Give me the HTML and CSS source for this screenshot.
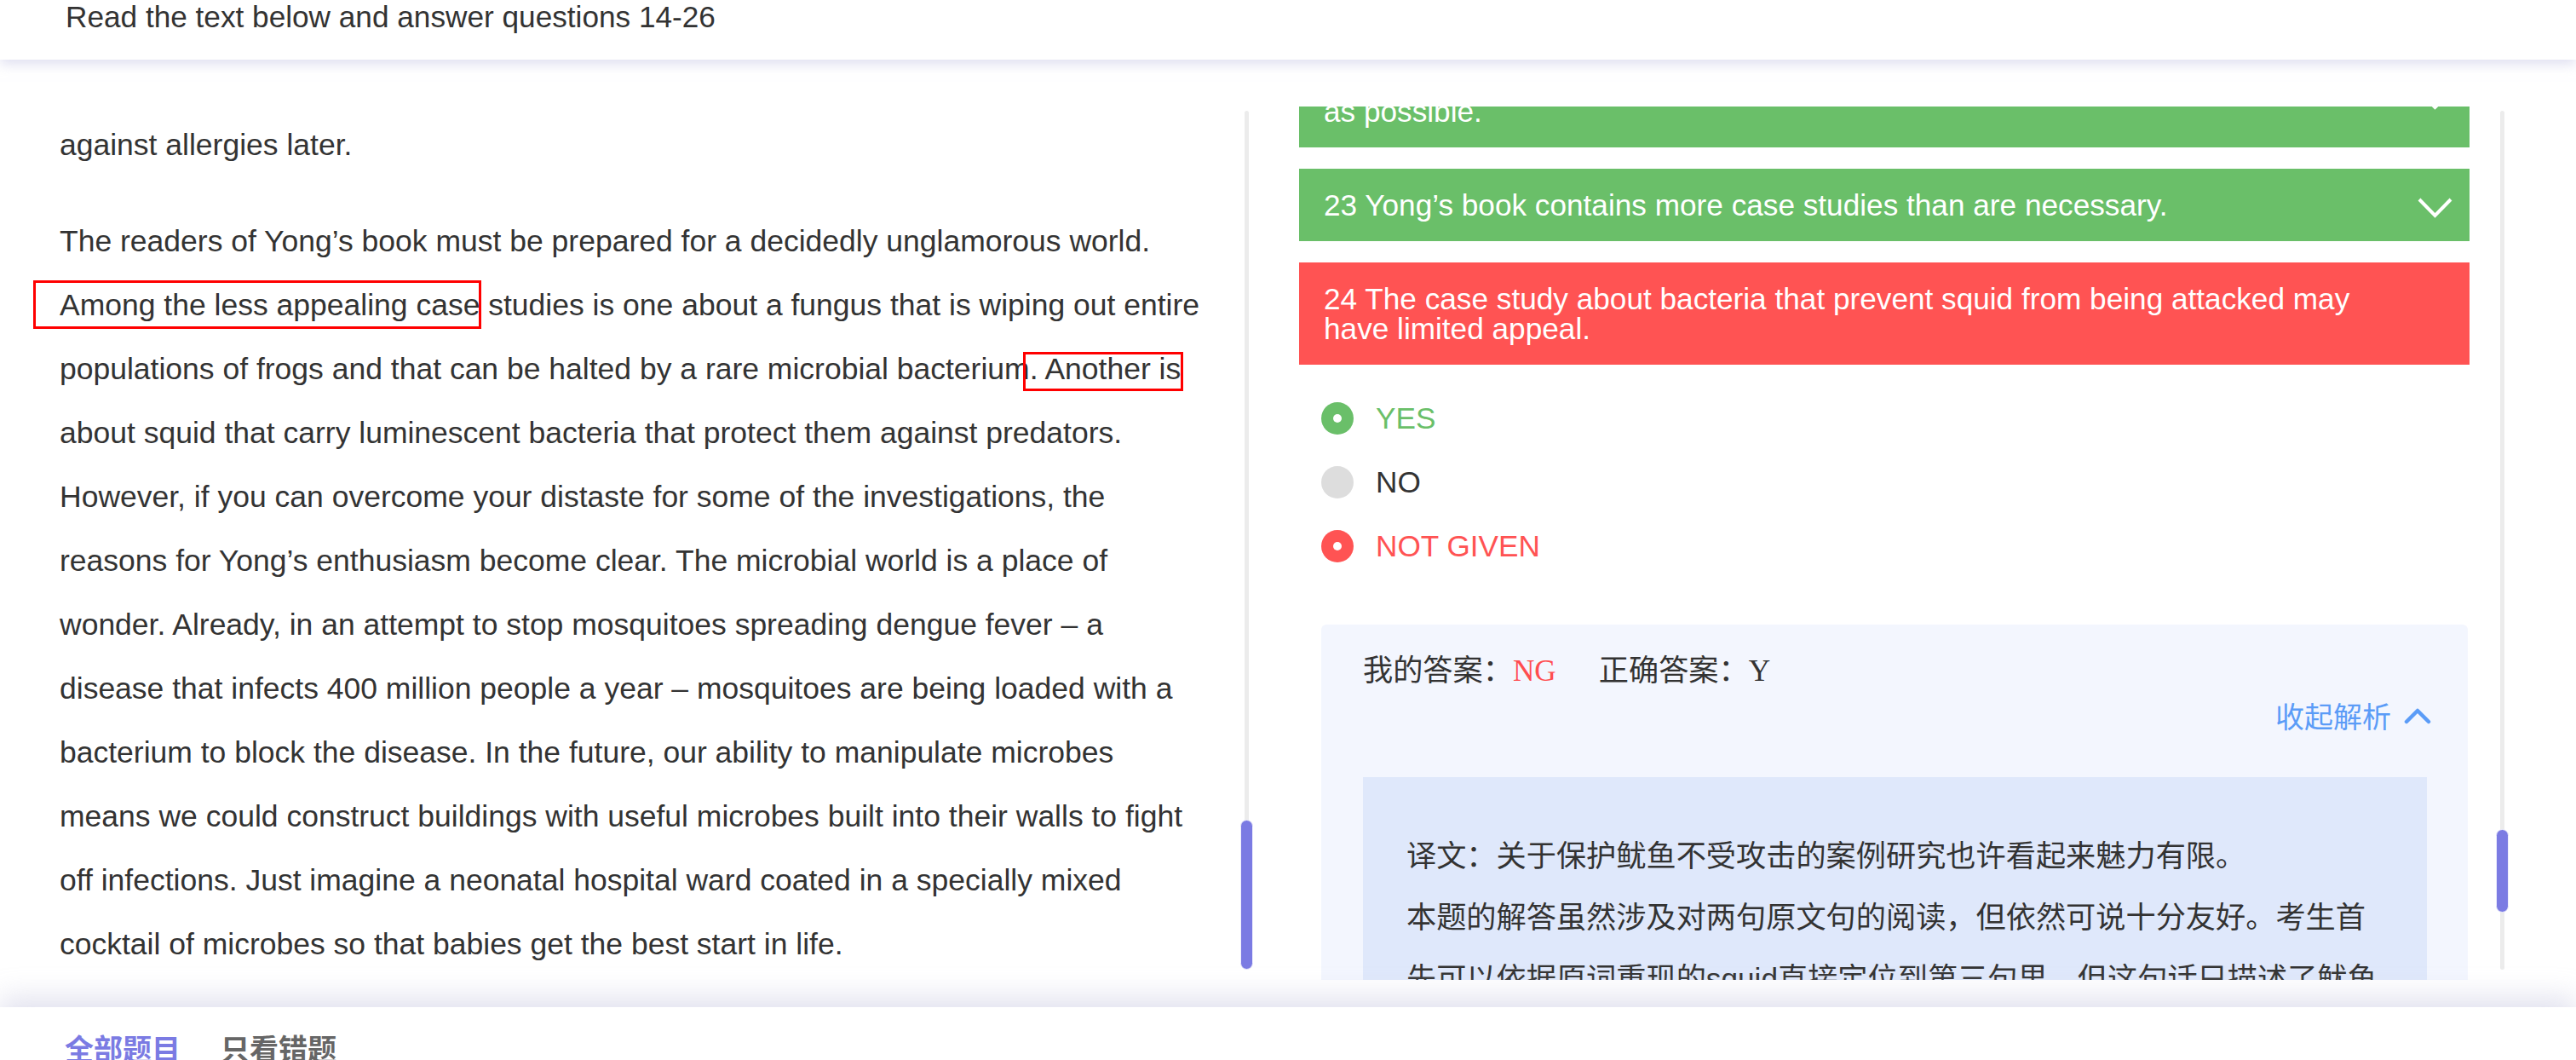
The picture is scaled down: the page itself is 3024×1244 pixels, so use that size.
FILE: index.html
```html
<!DOCTYPE html>
<html lang="zh-CN">
<head>
<meta charset="utf-8">
<title>Reading 14-26</title>
<link rel="stylesheet" href="styles.css">
</head>
<body>
<div class="page">
  <header class="topbar">Read the text below and answer questions 14-26</header>

  <main class="main">
    <section class="passage">
      <div class="passage-body">
        <p>against allergies later.</p>
        <p class="para-marked">The readers of Yong’s book must be prepared for a decidedly unglamorous world. Among the less appealing case studies is one about a fungus that is wiping out entire populations of frogs and that can be halted by a rare microbial bacterium. Another is about squid that carry luminescent bacteria that protect them against predators. However, if you can overcome your distaste for some of the investigations, the reasons for Yong’s enthusiasm become clear. The microbial world is a place of wonder. Already, in an attempt to stop mosquitoes spreading dengue fever – a disease that infects 400 million people a year – mosquitoes are being loaded with a bacterium to block the disease. In the future, our ability to manipulate microbes means we could construct buildings with useful microbes built into their walls to fight off infections. Just imagine a neonatal hospital ward coated in a specially mixed cocktail of microbes so that babies get the best start in life.<span class="mark mark-a"></span><span class="mark mark-b"></span></p>
      </div>
    </section>

    <div class="track"><div class="thumb thumb-left"></div></div>

    <section class="questions">
      <div class="q-list">
        <div class="bar bar-ok">
          <div class="bar-text">22 We should aim to eliminate microbes from our lives as far<br>as possible.</div>
          <svg class="chev" viewBox="0 0 41 24"><polyline points="2,2 20.5,21 39,2" fill="none" stroke="#fff" stroke-width="4"/></svg>
        </div>
        <div class="bar bar-ok">
          <div class="bar-text">23 Yong’s book contains more case studies than are necessary.</div>
          <svg class="chev" viewBox="0 0 41 24"><polyline points="2,2 20.5,21 39,2" fill="none" stroke="#fff" stroke-width="4"/></svg>
        </div>
        <div class="bar bar-bad">
          <div class="bar-text">24 The case study about bacteria that prevent squid from being attacked may have limited appeal.</div>
          <svg class="chev chev-hidden" viewBox="0 0 41 24"><polyline points="2,2 20.5,21 39,2" fill="none" stroke="#fff" stroke-width="4"/></svg>
        </div>

        <ul class="options">
          <li class="option opt-ok"><span class="radio radio-ok"></span>YES</li>
          <li class="option"><span class="radio"></span>NO</li>
          <li class="option opt-bad"><span class="radio radio-bad"></span>NOT GIVEN</li>
        </ul>

        <div class="answer-box">
          <div class="answer-line">我的答案：<span class="ng">NG</span>正确答案：<span class="right">Y</span></div>
          <div class="toggle">收起解析<svg viewBox="0 0 32 20"><polyline points="3,17 16,4 29,17" fill="none" stroke="currentColor" stroke-width="4.5" stroke-linejoin="round" stroke-linecap="round"/></svg></div>
          <div class="analysis">
            <p>译文：关于保护鱿鱼不受攻击的案例研究也许看起来魅力有限。</p>
            <p>本题的解答虽然涉及对两句原文句的阅读，但依然可说十分友好。考生首先可以依据原词重现的squid直接定位到第三句里，但这句话只描述了鱿鱼携带的发光细菌能保护它们免受捕食者的攻击。</p>
          </div>
        </div>
      </div>
    </section>

    <div class="track track-right"><div class="thumb thumb-right"></div></div>
  </main>

  <footer class="tabs">
    <span class="tab tab-active">全部题目</span>
    <span class="tab">只看错题</span>
  </footer>
</div>
</body>
</html>
```

FILE: styles.css
```css
* { box-sizing: border-box; }

html, body {
  margin: 0;
  padding: 0;
  background: #fff;
}

body {
  font-family: "Liberation Sans", Arial, "Noto Sans CJK SC", sans-serif;
  color: #333;
  overflow: hidden;
}

.page {
  display: flex;
  flex-direction: column;
  height: 1244px;
}

/* header */
.topbar {
  flex: none;
  height: 70px;
  padding-left: 77px;
  font-size: 35.2px;
  line-height: 40px;
  background: #fff;
  position: relative;
  z-index: 2;
  box-shadow: 0 5px 14px rgba(200, 200, 230, 0.6);
}

/* main split */
.main {
  flex: 1;
  min-height: 0;
  display: flex;
  padding: 55px 0 32px;
}

.passage {
  flex: none;
  width: 1461px;
  overflow: hidden;
  padding: 8px 0 0 70px;
}

.passage-body {
  width: 1340px;
  font-size: 35.5px;
  line-height: 75px;
}

.passage-body p {
  margin: 0 0 38px;
}

.para-marked {
  position: relative;
}

.mark {
  position: absolute;
  border: 3px solid #f00;
}

.mark-a { left: -31px; top: 83px; width: 526px; height: 57px; }
.mark-b { left: 1131px; top: 167px; width: 188px; height: 46px; }

/* scrollbars */
.track {
  flex: none;
  width: 5px;
  margin: 5px 0 12px;
  background: #ececec;
  border-radius: 3px;
  position: relative;
}

.thumb {
  position: absolute;
  left: -5px;
  width: 15px;
  background: #7b7be3;
  border: 1.5px solid #eeeefc;
  border-radius: 8px;
}

.thumb-left { bottom: 0; height: 176px; }
.thumb-right { top: 843px; height: 98px; }

/* questions */
.questions {
  flex: none;
  width: 1469px;
  overflow: hidden;
  padding: 0 36px 0 59px;
}

.q-list {
  margin-top: -72px;
}

.bar {
  display: flex;
  align-items: center;
  padding: 25px 20px 25px 29px;
  margin-bottom: 25px;
  color: #fff;
  font-size: 35.2px;
  line-height: 35px;
}

.bar-ok { background: #6abf69; }
.bar-bad { background: #ff5353; }

.bar-text { flex: 1; }

.chev {
  flex: none;
  width: 41px;
  height: 24px;
  margin: 7px 0 0 60px;
}

.chev-hidden { visibility: hidden; }

.options {
  list-style: none;
  margin: 0;
  padding: 0 0 0 26px;
}

.option {
  display: flex;
  align-items: center;
  gap: 26px;
  height: 75px;
  font-size: 35.2px;
}

.radio {
  flex: none;
  width: 38px;
  height: 38px;
  border-radius: 50%;
  background: #ddd;
  position: relative;
}

.radio-ok { background: #6abf69; }
.radio-bad { background: #ff5353; }

.radio-ok::after,
.radio-bad::after {
  content: "";
  position: absolute;
  left: 14px;
  top: 14px;
  width: 10px;
  height: 10px;
  border-radius: 50%;
  background: #fff;
}

.opt-ok { color: #6abf69; }
.opt-bad { color: #ff5353; }

/* answer + analysis */
.answer-box {
  margin: 55px 2px 0 26px;
  padding: 30px 48px 0 49px;
  background: #f3f6fe;
  border-radius: 6px;
}

.answer-line {
  font-family: "Liberation Serif", "Noto Sans CJK SC", serif;
  font-size: 35.2px;
  line-height: 50px;
  color: #333;
}

.ng {
  color: #ff4d4f;
  margin-right: 50px;
}

.toggle {
  display: flex;
  justify-content: flex-end;
  align-items: center;
  gap: 15px;
  margin-right: -5px;
  color: #5b9cf7;
  font-family: "Noto Sans CJK SC", sans-serif;
  font-size: 34px;
  line-height: 54px;
}

.toggle svg {
  width: 32px;
  height: 20px;
}

.analysis {
  margin-top: 45px;
  padding: 57px 51px 51px;
  background: #dfe8fb;
  font-size: 35.2px;
  line-height: 72px;
  color: #333;
}

.analysis p { margin: 0; }

/* footer tabs */
.tabs {
  flex: none;
  height: 62px;
  display: flex;
  gap: 47px;
  padding: 26px 0 0 76px;
  background: #fff;
  position: relative;
  z-index: 2;
  box-shadow: 0 -10px 34px rgba(210, 210, 230, 0.7);
  font-family: "Noto Sans CJK SC", sans-serif;
  font-weight: 700;
  font-size: 34px;
  line-height: 44px;
}

.tab { color: #666; }
.tab-active { color: #7b7be3; }
```
